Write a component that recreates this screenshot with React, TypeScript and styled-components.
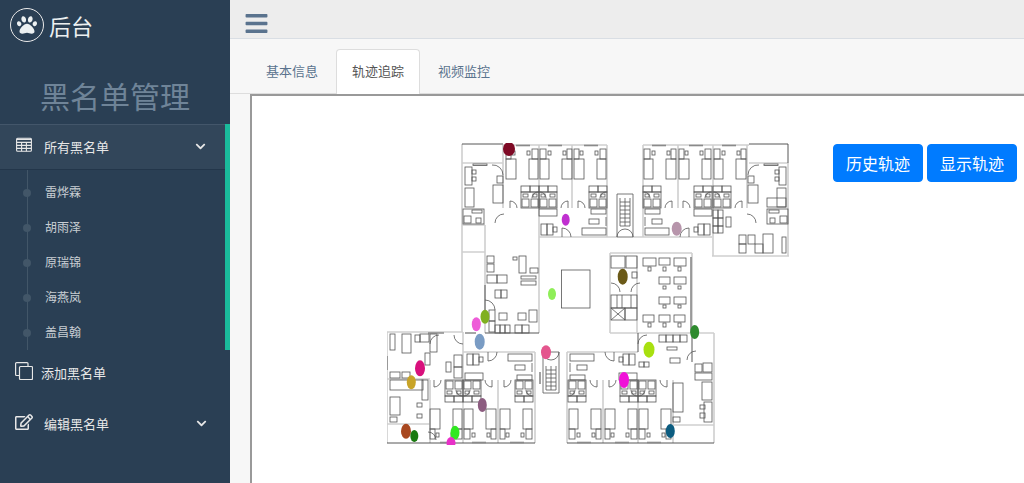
import { FunctionComponent } from "react";
import styled, { createGlobalStyle } from "styled-components";
import { FaBars, FaChevronDown, FaPaw, FaRegEdit } from "react-icons/fa";

const GlobalStyle = createGlobalStyle`
  html, body {
    margin: 0;
    height: 100%;
    overflow: hidden;
    background: #f7f7f7;
    font-family: "Liberation Sans", "Noto Sans CJK SC", sans-serif;
  }
  #root { height: 100%; }
`;

const Page = styled.div`
  display: flex;
  width: 1024px;
  height: 483px;
  overflow: hidden;
`;
const Sidebar = styled.aside`
  width: 230px;
  flex-shrink: 0;
  background: #2a3f54;
  color: #e7e7e7;
`;
const Brand = styled.div`
  height: 50px;
  display: flex;
  align-items: center;
  gap: 5px;
  padding-left: 10px;
  color: #ecf0f1;
  font-size: 22px;
`;
const BrandMark = styled.span`
  width: 34px;
  height: 34px;
  box-sizing: border-box;
  border: 1px solid #eaeaea;
  border-radius: 50%;
  display: flex;
  align-items: center;
  justify-content: center;
  font-size: 20px;
`;
const SideTitle = styled.h1`
  height: 74px;
  margin: 0;
  padding-top: 28px;
  box-sizing: border-box;
  text-align: center;
  font-size: 30px;
  line-height: 40px;
  font-weight: 400;
  color: #6f8498;
`;
const ActiveGroup = styled.div`
  border-right: 5px solid #1abb9c;
`;
const MenuRow = styled.div<{ $active?: boolean; $gap?: number }>`
  height: 46px;
  box-sizing: border-box;
  display: flex;
  align-items: center;
  padding: 0 0 2px 15px;
  margin-top: ${(p) => p.$gap ?? 0}px;
  font-size: 13px;
  color: #e7e7e7;
  background: ${(p) => (p.$active ? "rgba(255, 255, 255, 0.04)" : "transparent")};
  border-top: ${(p) => (p.$active ? "1px solid #43566a" : "0")};
  border-bottom: ${(p) => (p.$active ? "1px solid #23364a" : "0")};
`;
const MenuIcon = styled.svg<{ $width: number }>`
  width: 18px;
  height: 18px;
  flex-shrink: 0;
  margin-top: -3px;
  margin-right: ${(p) => p.$width}px;
`;
const MenuChevron = styled(FaChevronDown)<{ $right: number }>`
  margin-left: auto;
  margin-right: ${(p) => p.$right}px;
  font-size: 11px;
  color: #e7e7e7;
`;
const SubList = styled.ul`
  position: relative;
  list-style: none;
  margin: 0;
  padding: 6px 0 0;
  height: 180px;
  box-sizing: border-box;
  &::before {
    content: "";
    position: absolute;
    left: 27px;
    top: 0;
    bottom: 0;
    width: 1px;
    background: #425668;
  }
`;
const SubItem = styled.li`
  position: relative;
  height: 35px;
  line-height: 35px;
  padding-left: 45px;
  font-size: 12px;
  color: rgba(255, 255, 255, 0.75);
  &::before {
    content: "";
    position: absolute;
    left: 23px;
    top: 13px;
    width: 8px;
    height: 8px;
    border-radius: 50%;
    background: #425668;
  }
`;
const Main = styled.main`
  flex: 1;
  min-width: 0;
  background: #f7f7f7;
`;
const TopBar = styled.header`
  height: 39px;
  box-sizing: border-box;
  padding: 8px 0 0 14px;
  display: flex;
  align-items: center;
  background: #ededed;
  border-bottom: 1px solid #d9dee4;
  color: #5a738e;
  font-size: 25px;
`;
const Tabs = styled.nav`
  display: flex;
  gap: 2px;
  height: 55px;
  box-sizing: border-box;
  padding: 10px 0 0 20px;
  border-bottom: 1px solid #ddd;
`;
const Tab = styled.div<{ $active?: boolean }>`
  width: 84px;
  height: 45px;
  box-sizing: border-box;
  padding: 0 15px;
  border: 1px solid ${(p) => (p.$active ? "#ddd" : "transparent")};
  border-bottom: 0;
  border-radius: 4px 4px 0 0;
  background: ${(p) => (p.$active ? "#fff" : "transparent")};
  color: ${(p) => (p.$active ? "#555" : "#5a738e")};
  font-size: 13px;
  line-height: 44px;
  white-space: nowrap;
`;
const Frame = styled.section`
  display: flex;
  align-items: flex-start;
  width: 820px;
  height: 500px;
  box-sizing: border-box;
  margin-left: 20px;
  padding: 47px 0 0 135px;
  border: 2px solid #999;
  background: #fff;
`;
const Plan = styled.svg`
  width: 402px;
  height: 302px;
  flex-shrink: 0;
  rect, path, line {
    fill: none;
    stroke: #555;
    stroke-width: 0.8;
  }
`;
const Actions = styled.div`
  display: flex;
  gap: 4px;
  margin: 1px 0 0 44px;
`;
const ActionButton = styled.button`
  width: 90px;
  height: 38px;
  padding: 0;
  border: 1px solid #007bff;
  border-radius: 4px;
  background: #007bff;
  color: #fff;
  font: inherit;
  font-size: 16px;
`;
const Wall = styled.path`
  && {
    stroke: #cfcfcf;
    stroke-width: 1.6;
  }
`;
const DarkWall = styled.path`
  && {
    stroke: #444;
    stroke-width: 0.9;
  }
`;
const WindowBar = styled.path`
  && {
    stroke: #8a8a8a;
    stroke-width: 1.6;
  }
`;
const Marker = styled.ellipse`
  filter: blur(0.6px);
`;

type Box = [number, number, number, number];

const Boxes: FunctionComponent<{ items: Box[] }> = ({ items }) => (
  <>
    {items.map(([x, y, w, h], i) => (
      <rect key={i} x={x} y={y} width={w} height={h} />
    ))}
  </>
);

const roomBoxes: Box[] = [
  [1, 4, 6, 10], [9, 6, 3, 4], [24, 6, 3, 4], [28, 4, 5, 10],
  [1, 14, 9, 20], [23, 14, 10, 20],
  [0, 41, 9, 6], [9, 41, 9, 6], [0, 47, 18, 16],
  [1, 54, 7, 8], [10, 54, 7, 8], [2, 49, 4, 3], [11, 49, 5, 3],
];

// one bedroom, drawn from the outer wall inward
const Room: FunctionComponent<{ x: number; y: number; flipX?: boolean; flipY?: boolean }> = ({
  x,
  y,
  flipX,
  flipY,
}) => (
  <g transform={`translate(${x} ${y}) scale(${flipX ? -1 : 1} ${flipY ? -1 : 1})`}>
    <Boxes items={roomBoxes} />
    <path d="M22 63a7 7 0 0 1 7-7v7M1 47a6 6 0 0 1 6 6" />
    <WindowBar d="M9 0.5H23" />
  </g>
);

const loungeBoxes: Box[] = [
  [0, 0, 18, 7], [6, 0, 0, 7], [12, 0, 0, 7],
  [2, 15, 6, 11], [8, 15, 6, 11], [14, 18, 4, 5],
  [50, 10, 10, 5], [43, 19, 24, 7], [49, 19, 0, 7], [55, 19, 0, 7], [61, 19, 0, 7],
  [52, 0, 15, 5],
];

const Lounge: FunctionComponent<{ x: number; y: number; flipX?: boolean; flipY?: boolean }> = ({
  x,
  y,
  flipX,
  flipY,
}) => (
  <g transform={`translate(${x} ${y}) scale(${flipX ? -1 : 1} ${flipY ? -1 : 1})`}>
    <Boxes items={loungeBoxes} />
    <path d="M23 28V19a9 9 0 0 1 9 9M67 8V17" />
  </g>
);

const suiteBoxes: Box[] = [
  [3, 4, 7, 18], [10, 7, 4, 4], [10, 14, 4, 4], [3, 25, 9, 19], [31, 22, 10, 18],
  [35, 13, 6, 7], [11, 1, 14, 1.5], [1, 46, 21, 15], [2, 53, 7, 7], [10, 47, 10, 3], [14, 55, 5, 5],
];

const Suite: FunctionComponent<{ x: number; y: number; flipX?: boolean }> = ({ x, y, flipX }) => (
  <g transform={`translate(${x} ${y}) scale(${flipX ? -1 : 1} 1)`}>
    <Boxes items={suiteBoxes} />
    <path d="M30 2a10 10 0 0 1 11 10M33 60a9 9 0 0 1 9-9" />
  </g>
);

const diningBoxes: Box[] = [
  [643, 258, 13, 8], [659, 258, 11, 7], [674, 258, 12, 8],
  [648, 267, 3, 4], [663, 267, 3, 4], [678, 267, 3, 4],
  [659, 277, 11, 7], [674, 277, 12, 7], [663, 286, 3, 3], [678, 286, 3, 3],
  [659, 297, 11, 7], [674, 297, 12, 7], [663, 305, 3, 3], [678, 305, 3, 3],
  [643, 315, 11, 7], [659, 315, 11, 7], [674, 315, 11, 7],
  [648, 323, 3, 4], [663, 323, 3, 4], [678, 323, 3, 4],
  [611, 256, 14, 12], [626, 256, 11, 12], [632, 272, 5, 6],
  [611, 295, 26, 13], [611, 308, 14, 12], [625, 308, 12, 12],
];

const coreBoxes: Box[] = [
  [487, 256, 7, 7], [487, 264, 7, 8], [513, 257, 4, 3], [519, 256, 7, 17], [530, 268, 8, 5],
  [487, 275, 10, 8], [497, 275, 10, 8], [495, 290, 6, 8], [501, 290, 6, 8],
  [521, 276, 15, 3], [521, 281, 15, 4], [489, 310, 6, 11], [489, 321, 6, 11],
  [495, 325, 5, 8], [500, 325, 5, 8], [505, 325, 5, 8], [515, 325, 7, 8], [522, 325, 7, 8],
  [529, 310, 8, 12], [499, 313, 8, 7], [518, 313, 8, 7],
];

const lowerCornerBoxes: Box[] = [
  [390, 334, 5, 16], [402, 334, 9, 19], [415, 335, 5, 7], [420, 334, 9, 8], [430, 334, 7, 18],
  [425, 353, 5, 12], [390, 372, 10, 6], [402, 372, 8, 6], [390, 380, 33, 10], [390, 397, 10, 18],
  [422, 380, 6, 20], [417, 403, 5, 4], [417, 414, 5, 4], [390, 417, 7, 5], [446, 362, 5, 10],
  [454, 355, 8, 12], [454, 367, 8, 11],
];

const lowerRightBoxes: Box[] = [
  [659, 335, 7, 7], [666, 335, 7, 7], [673, 335, 7, 7], [680, 335, 7, 7], [667, 347, 10, 3],
  [639, 362, 5, 5], [644, 362, 5, 5], [670, 358, 10, 5], [695, 364, 7, 8], [703, 363, 9, 9],
  [695, 373, 17, 7], [673, 383, 10, 29], [702, 382, 10, 18], [700, 405, 5, 4], [700, 413, 5, 5],
  [704, 402, 8, 20], [673, 417, 7, 5],
];

const upperRightBoxes: Box[] = [
  [713, 210, 5, 8], [718, 210, 5, 8], [713, 218, 5, 8], [718, 218, 5, 8], [713, 226, 5, 7], [718, 226, 5, 7],
  [726, 217, 5, 10], [739, 235, 7, 9], [739, 244, 7, 9], [748, 235, 7, 9], [755, 244, 8, 9],
  [763, 234, 10, 19], [782, 237, 4, 16], [767, 198, 19, 9],
];

const markers: [number, number, number, number, string][] = [
  [509, 149, 6, 7, "#7e0a25"],
  [565.7, 219.7, 4, 6, "#c030d0"],
  [676.7, 228.7, 5, 7, "#b795ab"],
  [622.7, 276.7, 5, 8, "#6b5a18"],
  [552, 294, 4, 6, "#8fee58"],
  [485, 316.7, 4.5, 7, "#80b020"],
  [476.3, 324.3, 4.5, 7, "#ee5cd8"],
  [479.7, 341.7, 5, 8, "#7a9cc4"],
  [546, 352.3, 5, 7, "#e4568e"],
  [420, 368.3, 5, 8, "#d8107c"],
  [411.3, 382.3, 4.5, 7, "#c8a428"],
  [624, 380, 5, 8, "#f010d8"],
  [649, 349.7, 5.5, 8, "#a8e010"],
  [694.7, 332, 4.5, 7, "#2e8a2e"],
  [482.3, 405, 4.5, 7, "#8c5c80"],
  [406, 431.3, 5, 7.5, "#a84820"],
  [414.3, 436, 4, 6, "#1a7a10"],
  [455, 432.7, 4.5, 7, "#30e820"],
  [451, 443, 4.5, 6, "#e830c8"],
  [670.3, 431, 4.5, 7, "#0c5c80"],
];

const FloorPlan: FunctionComponent = () => (
  <Plan viewBox="387 143 402 302">
    <Wall d="M503 145H607M643 145H749M462 163H503M462 144V332M503 145V208M539 145V208M572 145V208M607 145V237M539 208V333M462 225H485M462 252H485M485 225V333M539 237H617M633 237H712M692 253V333M712 256H789M643 145V237M678 145V208M713 145V256M747 145V208M749 163H788M788 163V256" />
    <Wall d="M387 332H463M387 332V443M463 332V443M463 352H535M535 352V443M430 380V443M387 379H430M387 424H430M498 380V443M567 352V443M603 380V443M638 380V443M673 380V443M567 352H638M638 333H714M714 333V443M610 253H692M610 253V333M610 333H692M637 256V333M674 425H714" />
    <DarkWall d="M462 144H503M749 144H788V163M387 443H430M430 443H535M567 443H714M539 333H485M638 333V352M692 333V362" />
    <WindowBar d="M691 257V333M485 285V310M387 356V370M540 372V384M428 333H444M465 333H476" />
    <Room x={539} y={145} flipX />
    <Room x={539} y={145} />
    <Room x={607} y={145} flipX />
    <Room x={643} y={145} />
    <Room x={712} y={145} flipX />
    <Room x={713} y={145} />
    <Room x={463} y={443} flipX flipY />
    <Room x={463} y={443} flipY />
    <Room x={533} y={443} flipX flipY />
    <Room x={568} y={443} flipY />
    <Room x={638} y={443} flipX flipY />
    <Room x={638} y={443} flipY />
    <Lounge x={539} y={209} />
    <Lounge x={712} y={209} flipX />
    <Lounge x={465} y={380} flipY />
    <Lounge x={637} y={380} flipX flipY />
    <Suite x={462} y={163} />
    <Suite x={789} y={163} flipX />
    <Boxes items={diningBoxes} />
    <Boxes items={coreBoxes} />
    <Boxes items={lowerCornerBoxes} />
    <Boxes items={lowerRightBoxes} />
    <Boxes items={upperRightBoxes} />
    <Boxes items={[[561.5, 270, 28.5, 38]]} />
    {/* stairs */}
    <path d="M617 194H633V237H617ZM620 198V226H630V198M620 202H630M620 206H630M620 210H630M620 214H630M620 218H630M620 222H630M625 198V226M617 237a8 8 0 0 1 8-8a8 8 0 0 1 8 8" />
    <path d="M543 352H559V393H543ZM546 366V390H556V366M546 370H556M546 374H556M546 378H556M546 382H556M546 386H556M551 366V390M543 352a8 8 0 0 0 8 8a8 8 0 0 0 8-8" />
    <path d="M611 308L625 320M625 308L611 320M617 295V308M622 295V308M631 295V308" />
    <path d="M485 300a10 10 0 0 1 10 10M611 283a9 9 0 0 1 9 9M640 283a9 9 0 0 0 -9 9M430 344a9 9 0 0 1 9-9M463 344a9 9 0 0 1 -9-9M638 344a9 9 0 0 1 9-9M428 432a8 8 0 0 1 8 8M696 351a9 9 0 0 0 -9 9" />
    {markers.map(([cx, cy, rx, ry, color]) => (
      <Marker key={`${cx}-${cy}`} cx={cx} cy={cy} rx={rx} ry={ry} fill={color} />
    ))}
  </Plan>
);

const TableIcon = () => (
  <MenuIcon $width={11} viewBox="0 0 18 18" fill="none" stroke="#e7e7e7" strokeWidth="1.1">
    <rect x="1.6" y="2.2" width="14.8" height="13" rx="1" />
    <path d="M1.6 3.4H16.4M1.6 6.4H16.4M1.6 9.4H16.4M1.6 12.4H16.4M6.6 6.4V15.2M11.4 6.4V15.2" />
  </MenuIcon>
);

const CopyIcon = () => (
  <MenuIcon $width={8} viewBox="0 0 18 18" fill="none" stroke="#e7e7e7" strokeWidth="1.2">
    <path d="M4 13.5H1.6A1 1 0 0 1 .6 12.5V1.6A1 1 0 0 1 1.6 .6H12A1 1 0 0 1 13 1.6V4" />
    <rect x="4.5" y="4.5" width="13" height="13" rx="1" />
  </MenuIcon>
);

const EditIcon = styled(FaRegEdit)`
  width: 18px;
  height: 18px;
  margin-top: -3px;
  margin-right: 11px;
  flex-shrink: 0;
`;

const blacklist = ["雷烨霖", "胡雨泽", "原瑞锦", "海燕岚", "盖昌翰"];

const App: FunctionComponent = () => {
  return (
    <Page>
      <GlobalStyle />
      <Sidebar>
        <Brand>
          <BrandMark>
            <FaPaw />
          </BrandMark>
          后台
        </Brand>
        <SideTitle>黑名单管理</SideTitle>
        <ActiveGroup>
          <MenuRow $active>
            <TableIcon />
            所有黑名单
            <MenuChevron $right={19} />
          </MenuRow>
          <SubList>
            {blacklist.map((name) => (
              <SubItem key={name}>{name}</SubItem>
            ))}
          </SubList>
        </ActiveGroup>
        <MenuRow>
          <CopyIcon />
          添加黑名单
        </MenuRow>
        <MenuRow $gap={5}>
          <EditIcon />
          编辑黑名单
          <MenuChevron $right={23} />
        </MenuRow>
      </Sidebar>
      <Main>
        <TopBar>
          <FaBars />
        </TopBar>
        <Tabs>
          <Tab>基本信息</Tab>
          <Tab $active>轨迹追踪</Tab>
          <Tab>视频监控</Tab>
        </Tabs>
        <Frame>
          <FloorPlan />
          <Actions>
            <ActionButton>历史轨迹</ActionButton>
            <ActionButton>显示轨迹</ActionButton>
          </Actions>
        </Frame>
      </Main>
    </Page>
  );
};

export default App;
